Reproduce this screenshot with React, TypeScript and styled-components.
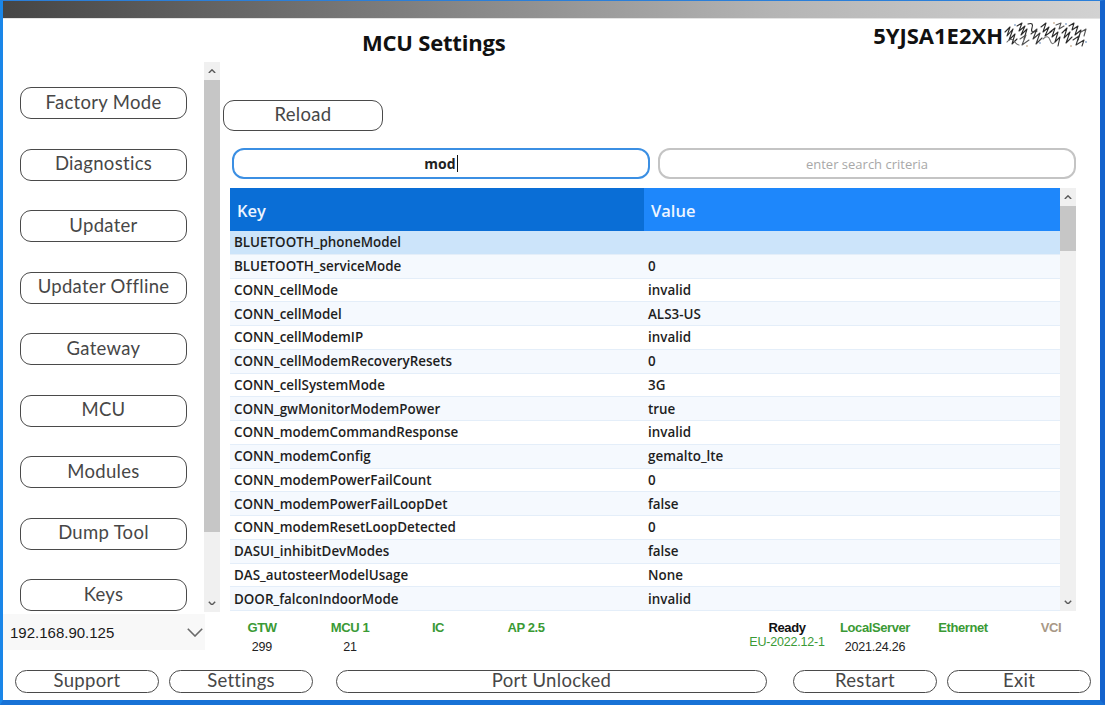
import styled, { createGlobalStyle } from "styled-components";

const GlobalStyle = createGlobalStyle`
  html, body {
    margin: 0;
    padding: 0;
    background: #ffffff;
  }
  body {
    width: 1105px;
    height: 705px;
    overflow: hidden;
    font-family: "Open Sans", "Noto Sans", sans-serif;
  }
  * {
    box-sizing: border-box;
  }
`;

const Window = styled.div`
  width: 1105px;
  height: 705px;
  display: grid;
  grid-template-columns: 217px 1fr;
  grid-template-rows: 18px 43px 550px 55px 1fr;
  border-top: 1px solid #2b7fd9;
  border-left: 3px solid #1a86e8;
  border-right: 5px solid #1463cc;
  border-bottom: 5px solid #1872d6;
  background: #ffffff;
`;

const TitleBar = styled.div`
  grid-column: 1 / -1;
  background: linear-gradient(to right, #454545, #7c7c7c 35%, #b4b4b4 70%, #d2d2d2);
  border-bottom: 1px solid #e4e4e4;
`;

const Header = styled.div`
  grid-column: 1 / -1;
  display: flex;
  align-items: flex-start;
  padding: 8px 11px 0 359px;
`;

const Title = styled.h1`
  margin: 0;
  font-size: 22px;
  font-weight: 700;
  color: #111;
  letter-spacing: -0.2px;
`;

const Vin = styled.div`
  margin-left: auto;
  margin-top: -7px;
  display: flex;
  align-items: center;
  font-size: 22px;
  font-weight: 700;
  color: #111;
`;

const Sidebar = styled.div`
  grid-column: 1;
  grid-row: 3;
  display: flex;
  padding-left: 17px;
  overflow: hidden;
`;

const NavList = styled.div`
  width: 167px;
  display: flex;
  flex-direction: column;
  gap: 29.5px;
  padding-top: 25px;
  margin-right: 17px;
`;

const OutlineButton = styled.button<{ $w?: number; $h?: number; $pill?: boolean }>`
  flex: none;
  width: ${(p) => (p.$w ? `${p.$w}px` : "100%")};
  height: ${(p) => p.$h ?? 32}px;
  border: 1.5px solid #4a4a4a;
  border-radius: ${(p) => (p.$pill ? "12px" : "11px")};
  background: #ffffff;
  color: #474747;
  font-family: "Lato", "Noto Sans", sans-serif;
  font-weight: 400;
  font-size: 18.5px;
  line-height: 1;
  padding: 0 0 2px;
  letter-spacing: 0.3px;
`;

const ScrollTrack = styled.div<{ $h: number }>`
  width: 16px;
  height: ${(p) => p.$h}px;
  flex: none;
  display: flex;
  flex-direction: column;
  background: #f0f0f0;
`;

const ArrowCell = styled.div`
  height: 18px;
  flex: none;
  display: flex;
  align-items: center;
  justify-content: center;
`;

const Thumb = styled.div<{ $h: number }>`
  height: ${(p) => p.$h}px;
  flex: none;
  background: #c6c6c6;
`;

const TrackFill = styled.div`
  flex: 1;
`;

const Content = styled.div`
  grid-column: 2;
  grid-row: 3;
  display: flex;
  flex-direction: column;
`;

const ReloadRow = styled.div`
  padding: 38px 0 0 3px;
`;

const SearchRow = styled.div`
  display: flex;
  gap: 8px;
  padding: 17px 0 0 12px;
`;

const SearchBox = styled.div<{ $active?: boolean }>`
  width: 418px;
  height: 31px;
  display: flex;
  align-items: center;
  justify-content: center;
  border: ${(p) => (p.$active ? "2px solid #3b8fe3" : "2px solid #c4c4c4")};
  border-radius: 12px;
  font-size: ${(p) => (p.$active ? "14px" : "13px")};
  font-weight: ${(p) => (p.$active ? 700 : 400)};
  color: ${(p) => (p.$active ? "#222" : "#a8a8a8")};
`;

const Caret = styled.span`
  display: inline-block;
  width: 1px;
  height: 17px;
  background: #111;
  margin-left: 1px;
`;

const Table = styled.div`
  margin: 9px 0 0 10px;
  width: 846px;
  height: 423px;
  display: grid;
  grid-template-columns: 1fr 16px;
`;

const TableBody = styled.div`
  display: flex;
  flex-direction: column;
`;

const HeadRow = styled.div`
  height: 43px;
  display: grid;
  grid-template-columns: 414px 1fr;
`;

const HeadCell = styled.div<{ $shade: string }>`
  background: ${(p) => p.$shade};
  color: #eef5ff;
  font-size: 16.5px;
  font-weight: 600;
  display: flex;
  align-items: center;
  padding-left: 7px;
  padding-top: 2px;
`;

const Row = styled.div<{ $selected?: boolean; $alt?: boolean }>`
  height: 23.75px;
  display: grid;
  grid-template-columns: 414px 1fr;
  align-items: center;
  background: ${(p) => (p.$selected ? "#cce4fa" : p.$alt ? "#f5f9fe" : "#ffffff")};
  border-bottom: 1px solid #e4eef9;
  font-size: 13.4px;
  font-weight: 600;
  color: #1e1e1e;
`;

const Cell = styled.div`
  padding-left: 4px;
  white-space: nowrap;
`;

const IpSelect = styled.div`
  grid-column: 1;
  grid-row: 4;
  margin-top: 2px;
  width: 202px;
  height: 36px;
  display: flex;
  align-items: center;
  justify-content: space-between;
  padding: 0 1px 0 7px;
  background: #f8f8f8;
  font-family: "Liberation Sans", Arial, sans-serif;
  font-size: 15px;
  color: #1a1a1a;
`;

const StatusBar = styled.div`
  grid-column: 2;
  grid-row: 4;
  display: flex;
  justify-content: space-between;
  padding: 8px 5px 0 0;
  margin-left: -2px;
`;

const StatusGroup = styled.div`
  display: flex;
`;

const StatusCell = styled.div`
  width: 88px;
  display: flex;
  flex-direction: column;
  align-items: center;
  font-family: "Liberation Sans Narrow", "Liberation Sans", Arial, sans-serif;
`;

const StatusLabel = styled.div<{ $tone: string }>`
  height: 16px;
  font-size: 13px;
  font-weight: 700;
  letter-spacing: -0.4px;
  color: ${(p) => p.$tone};
`;

const StatusValue = styled.div<{ $tone?: string; $lift?: number }>`
  margin-top: ${(p) => 4 - (p.$lift ?? 0)}px;
  font-size: 12.5px;
  letter-spacing: -0.2px;
  color: ${(p) => p.$tone ?? "#222"};
`;

const BottomBar = styled.div`
  grid-column: 1 / -1;
  display: flex;
  align-items: flex-start;
  gap: 10px;
  padding: 3px 0 0 12px;
`;

const Chevron = ({
  up,
  size = 8,
  color = "#5a5a5a",
  weight = 1.8,
}: {
  up?: boolean;
  size?: number;
  color?: string;
  weight?: number;
}) => (
  <svg width={size} height={size * 0.6} viewBox="0 0 10 6">
    <polyline
      points={up ? "1,5 5,1 9,5" : "1,1 5,5 9,1"}
      fill="none"
      stroke={color}
      strokeWidth={weight}
    />
  </svg>
);

// hand scribble that blots out the tail of the VIN
const Scribble = () => (
  <svg width="86" height="30" viewBox="0 0 86 30">
    <g fill="none" stroke="#2a2a2a" strokeWidth="1.1" strokeLinecap="round" strokeLinejoin="round">
      <path d="M2 12 L7 7 L4 16 L10 9 L6 20 L12 14 L9 24 L14 19" />
      <path d="M4 22 Q8 17 11 21 T16 25" stroke="#666" />
      <path d="M14 6 L19 3 L16 11 L22 6 L18 15 L24 9 L21 19" />
      <path d="M17 19 L23 15 L19 25 L26 20" stroke="#555" />
      <path d="M25 4 Q31 2 29 8 T34 11" />
      <path d="M28 14 L34 9 L30 19 L37 13 L33 24 L39 18" stroke="#3a3a3a" />
      <path d="M38 7 L43 3 L40 12 L46 7 L42 16 L49 11" />
      <path d="M40 19 Q45 14 47 20 T52 22" stroke="#777" />
      <path d="M47 12 L52 8 L49 17 L55 12 L52 22 L57 17 L55 26" />
      <path d="M53 5 L58 3 L56 9 L61 6" stroke="#555" />
      <path d="M59 13 L64 8 L61 18 L67 12 L63 23 L69 17" />
      <path d="M66 6 L71 3 L69 10 L75 6 L72 15 L78 10 L75 20" />
      <path d="M70 20 L76 16 L73 25 L81 20 L79 26" stroke="#333" />
      <path d="M78 12 L83 9 L81 16" stroke="#555" />
    </g>
    <g fill="#8aa4c8">
      <circle cx="12" cy="5" r="0.9" />
      <circle cx="37" cy="23" r="0.9" />
      <circle cx="63" cy="4" r="0.9" />
      <circle cx="83" cy="22" r="0.9" />
    </g>
    <g fill="#b08a60">
      <circle cx="24" cy="26" r="0.8" />
      <circle cx="51" cy="3" r="0.8" />
      <circle cx="68" cy="26" r="0.8" />
    </g>
  </svg>
);

const navItems = [
  "Factory Mode",
  "Diagnostics",
  "Updater",
  "Updater Offline",
  "Gateway",
  "MCU",
  "Modules",
  "Dump Tool",
  "Keys",
];

const rows: [string, string][] = [
  ["BLUETOOTH_phoneModel", ""],
  ["BLUETOOTH_serviceMode", "0"],
  ["CONN_cellMode", "invalid"],
  ["CONN_cellModel", "ALS3-US"],
  ["CONN_cellModemIP", "invalid"],
  ["CONN_cellModemRecoveryResets", "0"],
  ["CONN_cellSystemMode", "3G"],
  ["CONN_gwMonitorModemPower", "true"],
  ["CONN_modemCommandResponse", "invalid"],
  ["CONN_modemConfig", "gemalto_lte"],
  ["CONN_modemPowerFailCount", "0"],
  ["CONN_modemPowerFailLoopDet", "false"],
  ["CONN_modemResetLoopDetected", "0"],
  ["DASUI_inhibitDevModes", "false"],
  ["DAS_autosteerModelUsage", "None"],
  ["DOOR_falconIndoorMode", "invalid"],
];

const GREEN = "#3a9a35";

type Status = { label: string; tone: string; value?: string; valueTone?: string; lift?: number };

const leftStatus: Status[] = [
  { label: "GTW", tone: GREEN, value: "299" },
  { label: "MCU 1", tone: GREEN, value: "21" },
  { label: "IC", tone: GREEN },
  { label: "AP 2.5", tone: GREEN },
];

const rightStatus: Status[] = [
  { label: "Ready", tone: "#111", value: "EU-2022.12-1", valueTone: GREEN, lift: 5 },
  { label: "LocalServer", tone: GREEN, value: "2021.24.26" },
  { label: "Ethernet", tone: GREEN },
  { label: "VCI", tone: "#a89886" },
];

const StatusItems = ({ items }: { items: Status[] }) => (
  <StatusGroup>
    {items.map((s) => (
      <StatusCell key={s.label}>
        <StatusLabel $tone={s.tone}>{s.label}</StatusLabel>
        {s.value && (
          <StatusValue $tone={s.valueTone} $lift={s.lift}>
            {s.value}
          </StatusValue>
        )}
      </StatusCell>
    ))}
  </StatusGroup>
);

export default function App() {
  return (
    <>
      <GlobalStyle />
      <Window>
        <TitleBar />
        <Header>
          <Title>MCU Settings</Title>
          <Vin>
            5YJSA1E2XH
            <Scribble />
          </Vin>
        </Header>

        <Sidebar>
          <NavList>
            {navItems.map((n) => (
              <OutlineButton key={n}>{n}</OutlineButton>
            ))}
          </NavList>
          <ScrollTrack $h={550}>
            <ArrowCell>
              <Chevron up />
            </ArrowCell>
            <Thumb $h={452} />
            <TrackFill />
            <ArrowCell>
              <Chevron />
            </ArrowCell>
          </ScrollTrack>
        </Sidebar>

        <Content>
          <ReloadRow>
            <OutlineButton $w={160} $h={31}>
              Reload
            </OutlineButton>
          </ReloadRow>
          <SearchRow>
            <SearchBox $active>
              mod
              <Caret />
            </SearchBox>
            <SearchBox>enter search criteria</SearchBox>
          </SearchRow>
          <Table>
            <TableBody>
              <HeadRow>
                <HeadCell $shade="#0a6ed6">Key</HeadCell>
                <HeadCell $shade="#1e87fb">Value</HeadCell>
              </HeadRow>
              {rows.map(([k, v], i) => (
                <Row key={k} $selected={i === 0} $alt={i % 2 === 1}>
                  <Cell>{k}</Cell>
                  <Cell>{v}</Cell>
                </Row>
              ))}
            </TableBody>
            <ScrollTrack $h={423}>
              <ArrowCell>
                <Chevron up />
              </ArrowCell>
              <Thumb $h={45} />
              <TrackFill />
              <ArrowCell>
                <Chevron />
              </ArrowCell>
            </ScrollTrack>
          </Table>
        </Content>

        <IpSelect>
          192.168.90.125
          <Chevron size={18} color="#6a6a6a" weight={0.9} />
        </IpSelect>

        <StatusBar>
          <StatusItems items={leftStatus} />
          <StatusItems items={rightStatus} />
        </StatusBar>

        <BottomBar>
          <OutlineButton $w={144} $h={23} $pill>
            Support
          </OutlineButton>
          <OutlineButton $w={144} $h={23} $pill>
            Settings
          </OutlineButton>
          <OutlineButton $w={431} $h={23} $pill style={{ margin: "0 16px 0 13px" }}>
            Port Unlocked
          </OutlineButton>
          <OutlineButton $w={144} $h={23} $pill>
            Restart
          </OutlineButton>
          <OutlineButton $w={144} $h={23} $pill>
            Exit
          </OutlineButton>
        </BottomBar>
      </Window>
    </>
  );
}
